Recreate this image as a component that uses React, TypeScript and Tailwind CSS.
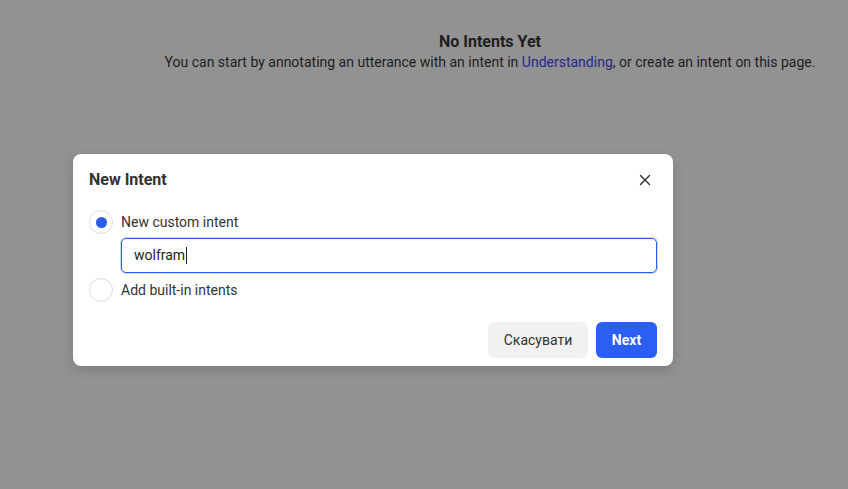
import { X } from "lucide-react";

function Radio({ checked, label }: { checked?: boolean; label: string }) {
  return (
    <div className="flex items-center gap-2">
      <span className="flex h-6 w-6 items-center justify-center rounded-full border border-[#dcdcdc] bg-white">
        {checked && <span className="h-[11px] w-[11px] rounded-full bg-[#2b5ce6]" />}
      </span>
      <span className="text-[14px] text-[#333]">{label}</span>
    </div>
  );
}

export default function App() {
  return (
    <div
      className="relative h-[489px] w-[848px] overflow-hidden bg-[#929292]"
      style={{ fontFamily: "Roboto, 'Liberation Sans', sans-serif" }}
    >
      {/* Empty state behind overlay */}
      <div className="flex flex-col items-center pl-[132px] pt-[32px] text-[#1e1e1e]">
        <p className="text-[16px] font-bold leading-[19px]">No Intents Yet</p>
        <p className="mt-[3px] text-[14px] leading-[17px]">
          You can start by annotating an utterance with an intent in{" "}
          <span className="text-[#25278a]">Understanding</span>, or create an intent on this page.
        </p>
      </div>

      {/* Modal */}
      <div className="absolute left-[73px] top-[154px] w-[600px] rounded-lg bg-white px-4 pb-2 pt-4 shadow-[0_4px_12px_rgba(0,0,0,0.15)]">
        <div className="flex items-center justify-between">
          <h2 className="text-[16px] font-bold leading-[20px] text-[#333]">New Intent</h2>
          <button className="mr-[2px] flex h-5 w-5 items-center justify-center text-[#333]">
            <X size={18} strokeWidth={1.8} />
          </button>
        </div>

        <div className="mt-[20px] flex flex-col">
          <Radio checked label="New custom intent" />
          <div className="mt-[4px] pl-8">
            <div className="flex h-[35px] items-center rounded-[5px] border border-[#2b5ce6] px-3 shadow-[0_0_0_1px_rgba(43,92,230,0.25)]">
              <span className="text-[14px] text-[#222]">wolfram</span>
              <span className="ml-px h-[17px] w-px bg-[#222]" />
            </div>
          </div>
          <div className="mt-[5px]">
            <Radio label="Add built-in intents" />
          </div>
        </div>

        <div className="mt-[20px] flex justify-end gap-2">
          <button className="h-9 w-[100px] rounded-md bg-[#f1f1f1] text-[14px] text-[#333]">Скасувати</button>
          <button className="h-9 w-[61px] rounded-md bg-[#2b5ef2] text-[14px] font-bold text-white">Next</button>
        </div>
      </div>
    </div>
  );
}
